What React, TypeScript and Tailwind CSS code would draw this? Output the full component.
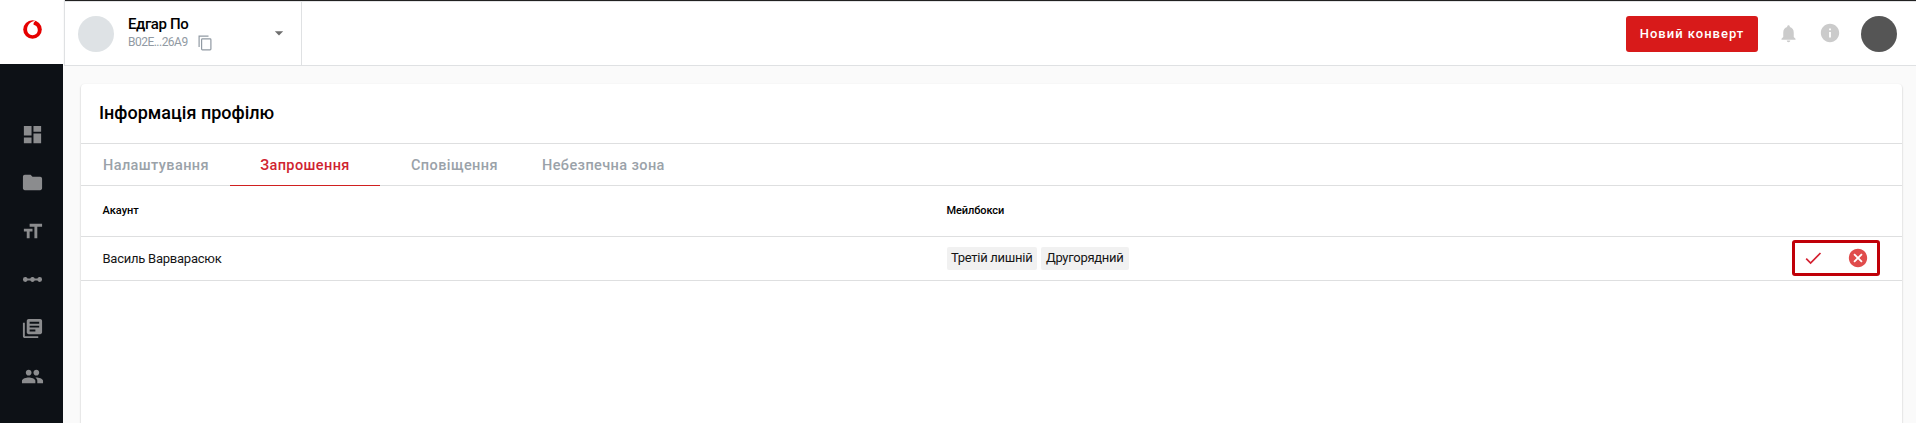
import React from "react";
import {
  MdArrowDropDown, MdCancel, MdDashboard, MdFolder, MdFormatSize,
  MdInfo, MdLibraryBooks, MdLinearScale, MdNotifications, MdPeople,
} from "react-icons/md";

const navItems = [MdDashboard, MdFolder, MdFormatSize, MdLinearScale, MdLibraryBooks, MdPeople];
const mailboxes = ["Третій лишній", "Другорядний"];

function Logo() {
  return (
    <svg viewBox="0 0 19 19" className="h-[19px] w-[19px]">
      <circle cx="9.5" cy="9.5" r="9.3" fill="#e60000" />
      <path d="M11.8 1C8 1.2 4.1 4.6 4.1 9.6C4.1 12.9 6.5 15.2 9.6 15.2C12.6 15.2 14.8 13 14.8 10C14.8 7.2 13.3 5.4 10.6 4.7C10.3 3.2 10.8 1.9 12.2 1.2Z" fill="#fff" />
    </svg>
  );
}

function CopyIcon() {
  return (
    <svg viewBox="0 0 14 16" className="mt-px ml-[10px] h-4 w-[14px] shrink-0" fill="none" stroke="#919aa3" strokeWidth="1.2">
      <path d="M1.1 12V1.1H10.5" />
      <rect x="3.6" y="3.9" width="9.3" height="11" rx="0.8" />
    </svg>
  );
}

function CheckIcon() {
  return (
    <svg viewBox="0 0 20 20" className="size-5" fill="none" stroke="#d42030" strokeWidth="1.7">
      <path d="M3.2 10.6L7.6 15L17.5 5" />
    </svg>
  );
}

function Sidebar() {
  return (
    <aside className="flex w-[63px] shrink-0 flex-col bg-[#0d1116]">
      <div className="flex h-16 items-center justify-center bg-white pb-[5px] pl-[1px]">
        <Logo />
      </div>
      <nav className="flex flex-col pt-[46px] pl-[1px]">
        {navItems.map((Icon, i) => (
          <a key={i} className="flex h-[48.5px] items-center justify-center text-[#8b8c8e]">
            <Icon size={23} />
          </a>
        ))}
      </nav>
    </aside>
  );
}

function Header() {
  return (
    <header className="ml-px flex h-[66px] shrink-0 flex-col border-b border-l border-[#dfe1e3] bg-white">
      <div className="h-px shrink-0 bg-[#212121]" />
      <div className="flex flex-1 border-t border-[#e3e4e6]">
        <div className="flex w-[237px] border-r border-[#dfe1e3] pl-[13px]">
          <div className="mt-[14px] size-9 rounded-full bg-[#dee2e5]" />
          <div className="ml-[14px] flex-1 pt-[12px]">
            <div className="text-[15px] leading-5 font-medium tracking-[-0.38px] text-black">Едгар По</div>
            <div className="flex h-4 text-[12px] leading-[17px] tracking-[-0.52px] text-[#919aa3]">
              B02E...26A9
              <CopyIcon />
            </div>
          </div>
          <MdArrowDropDown size={20} className="mt-[21px] mr-[12px] text-[#6e6e6e]" />
        </div>
        <div className="flex flex-1 items-start justify-end pt-[14px] pr-[19px]">
          <button className="h-9 w-[132px] rounded-[3px] bg-[#d81a1a] text-[13px] font-medium tracking-[1px] text-white">
            Новий конверт
          </button>
          <MdNotifications size={21} className="mt-[7px] ml-[20px] text-[#cbcbcb]" />
          <MdInfo size={22} className="mt-[6px] ml-[20px] text-[#cbcbcb]" />
          <div className="ml-[20px] size-9 rounded-full bg-[#555]" />
        </div>
      </div>
    </header>
  );
}

function Tabs() {
  return (
    <div className="flex h-[42px] border-b border-[#dedfe0] pl-[22px] text-[14.5px] leading-[43px] font-medium tracking-[0.4px] text-[#9aa2a9]">
      <span className="w-[127px]">Налаштування</span>
      <span className="h-[42px] w-[150px] border-b border-[#d02020] text-center text-[#cf2330]">Запрошення</span>
      <span className="w-[162px] pl-[31px]">Сповіщення</span>
      <span className="whitespace-nowrap">Небезпечна зона</span>
    </div>
  );
}

export default function App() {
  return (
    <div className="flex h-[423px] overflow-hidden bg-[#fafafa] font-[Roboto,sans-serif] text-black">
      <Sidebar />
      <div className="flex min-w-0 flex-1 flex-col">
        <Header />
        <main className="mt-[18px] mr-[14px] ml-[18px] flex-1 rounded-t-[4px] bg-white shadow-[0_1px_2px_rgba(0,0,0,0.28)]">
          <h1 className="h-[60px] border-b border-[#dedfe0] pl-[18px] text-[18px] leading-[58px] font-medium">
            Інформація профілю
          </h1>
          <Tabs />
          <div className="grid h-[51px] grid-cols-[844px_1fr] border-b border-[#dedfe0] pl-[21.5px] text-[11px] leading-[49px] font-medium">
            <span>Акаунт</span>
            <span className="tracking-[-0.1px]">Мейлбокси</span>
          </div>
          <div className="grid h-[44px] grid-cols-[844px_1fr_auto] border-b border-[#dedfe0] pl-[21.5px] text-[13px] text-[#151515]">
            <span className="leading-[44px] tracking-[-0.24px]">Василь Варварасюк</span>
            <div className="flex gap-1 pt-[10px] tracking-[-0.28px]">
              {mailboxes.map((name) => (
                <span key={name} className="h-[23px] rounded-[2px] bg-[#f1f1f1] pr-[5px] pl-[4.5px] leading-[22px]">{name}</span>
              ))}
            </div>
            <div className="mt-[3px] mr-[22px] flex h-9 w-[88px] items-center rounded-[3px] border-[3px] border-[#c00008] pl-[8px]">
              <CheckIcon />
              <MdCancel size={22} className="ml-[24px] text-[#e04c4c]" />
            </div>
          </div>
        </main>
      </div>
    </div>
  );
}
